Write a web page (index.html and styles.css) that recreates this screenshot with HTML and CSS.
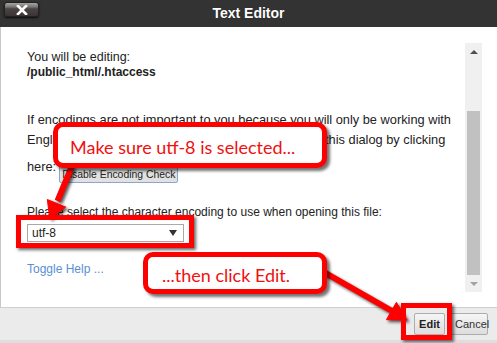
FILE: index.html
```html
<!DOCTYPE html>
<html>
<head>
<meta charset="utf-8">
<link rel="stylesheet" href="styles.css">
</head>
<body>
<div class="dialog">
  <div class="titlebar">
    <button class="close" aria-label="Close">
      <svg width="12" height="10" viewBox="0 0 12 10"><path d="M2 1 L10 9 M10 1 L2 9" stroke="#fff" stroke-width="2.6" stroke-linecap="square"/></svg>
    </button>
    <div class="title">Text Editor</div>
    <div></div>
  </div>
  <div class="main">
    <div class="content">
      <p class="editing">You will be editing:<br><strong>/public_html/.htaccess</strong></p>
      <p class="help">If encodings are not important to you because you will only be working with English language characters, you can safely disable this dialog by clicking</p>
      <div class="disable-row"><span>here:</span><button class="disable">Disable Encoding Check</button></div>
      <p class="select-label">Please select the character encoding to use when opening this file:</p>
      <div class="select"><span>utf-8</span><span class="caret"></span></div>
      <a class="toggle">Toggle Help ...</a>
    </div>
    <div class="scrollbar">
      <div class="sb-btn"><span class="tri-up"></span></div>
      <div class="sb-track"><div class="sb-thumb"></div></div>
      <div class="sb-btn"><span class="tri-down"></span></div>
    </div>
  </div>
  <div class="footer">
    <button class="btn edit">Edit</button>
    <button class="btn cancel">Cancel</button>
  </div>

  <svg class="arrows" width="497" height="343" viewBox="0 0 497 343">
    <g fill="#f00" stroke="#f00">
      <line x1="72" y1="166" x2="57.5" y2="201" stroke-width="6"/>
      <polygon points="50,219 65.7,207.1 47.3,199.5" stroke-width="1" stroke-linejoin="round"/>
      <line x1="322" y1="271" x2="392" y2="311" stroke-width="6"/>
      <polygon points="407,320 386.4,319.7 396.4,302.3" stroke-width="1" stroke-linejoin="round"/>
    </g>
  </svg>
  <div class="hl hl-select"></div>
  <div class="hl hl-edit"></div>
  <div class="callout callout-1">Make sure utf-8 is selected...</div>
  <div class="callout callout-2">...then click Edit.</div>
</div>
</body>
</html>
```
FILE: styles.css
```css
* { box-sizing: border-box; }
html, body { margin: 0; padding: 0; }
body {
  width: 497px;
  height: 343px;
  overflow: hidden;
  background: #fff;
  font-family: "Liberation Sans", Arial, sans-serif;
}
.dialog {
  position: relative;
  width: 497px;
  height: 343px;
  display: flex;
  flex-direction: column;
}
.titlebar {
  height: 27px;
  background: #333;
  display: grid;
  grid-template-columns: 1fr auto 1fr;
  align-items: center;
}
.close {
  justify-self: start;
  margin: 0 0 8px 4px;
  width: 35px;
  height: 15px;
  padding: 0;
  border: 1px solid #222;
  border-radius: 3px;
  background: linear-gradient(#a5a5a5 0%, #7a7575 30%, #4a4343 45%, #3c3535 100%);
  box-shadow: 0 1px 2px rgba(0,0,0,.8);
  display: flex;
  align-items: center;
  justify-content: center;
}
.close svg { display: block; }
.title {
  color: #fff;
  font-weight: bold;
  font-size: 14px;
  line-height: 16px;
  text-shadow: 0 0 1px rgba(0,0,0,.6);
  padding-bottom: 2px;
}
.main {
  height: 280px;
  display: flex;
  border-left: 1px solid #c9c9c9;
}
.content {
  flex: 1;
  padding: 23px 0 0 26px;
  font-size: 12px;
  color: #222;
}
.content p { margin: 0; }
.editing { line-height: 15px; font-size: 12.5px; }
.editing strong { font-size: 12px; }
.help { margin-top: 30px !important; line-height: 20px; font-size: 12.8px; }
.disable-row {
  margin-top: 7px;
  display: flex;
  align-items: flex-start;
  line-height: 20px;
  font-size: 12.8px;
}
.disable {
  margin: 8px 0 0 3px;
  height: 18px;
  padding: 0 2px;
  font: 10.4px "Liberation Sans", Arial, sans-serif;
  color: #222;
  background: #e1e1e1;
  border: 1px solid #8aa6cc;
  border-radius: 2px;
}
.select-label { margin-top: 22px !important; line-height: 15px; }
.select {
  margin-top: 4px;
  width: 157px;
  height: 18px;
  border: 1px solid #a9a9a9;
  display: flex;
  align-items: center;
  justify-content: space-between;
  padding: 0 6px 0 4px;
  font-size: 12px;
  color: #222;
}
.caret {
  width: 0; height: 0;
  border-left: 4px solid transparent;
  border-right: 4px solid transparent;
  border-top: 6px solid #333;
}
.toggle {
  display: block;
  margin-top: 20px;
  line-height: 15px;
  color: #5b8fd2;
  font-size: 12px;
}
.scrollbar {
  margin: 16px 15px 0 3px;
  width: 17px;
  height: 249px;
  background: #f0f0f0;
  display: flex;
  flex-direction: column;
}
.sb-btn {
  height: 17px;
  display: flex;
  align-items: center;
  justify-content: center;
}
.tri-up {
  width: 0; height: 0;
  border-left: 4px solid transparent;
  border-right: 4px solid transparent;
  border-bottom: 4px solid #505050;
}
.tri-down {
  width: 0; height: 0;
  border-left: 4px solid transparent;
  border-right: 4px solid transparent;
  border-top: 4px solid #a3a3a3;
}
.sb-track { flex: 1; padding: 51px 2px 0; }
.sb-thumb { height: 164px; background: #c1c1c1; }
.footer {
  flex: 1;
  background: #ebebeb;
  border-top: 1px solid #cfcfcf;
  border-bottom: 3px solid #dedede;
  display: flex;
  justify-content: flex-end;
  align-items: flex-start;
  padding: 5px 9px 0 0;
  gap: 6px;
}
.btn {
  height: 22px;
  font: 11px "Liberation Sans", Arial, sans-serif;
  color: #222;
  background: linear-gradient(#f6f6f6, #dddddd);
  border: 1px solid #adadad;
  border-radius: 2px;
  padding: 0 3px;
}
.edit { font-weight: bold; width: 31px; }
.cancel { width: 37px; color: #333; }

.arrows {
  position: absolute;
  left: 0; top: 0;
  filter: drop-shadow(2px 2px 1.5px rgba(0,0,0,.65));
}
.hl {
  position: absolute;
  border: 5px solid #f00;
  box-shadow: 2px 2px 3px rgba(0,0,0,.6);
}
.hl-select { left: 16px; top: 215px; width: 178px; height: 33px; }
.hl-edit { left: 401px; top: 303px; width: 51px; height: 37px; }
.callout {
  position: absolute;
  background: #fff;
  border: 5px solid #f00;
  border-radius: 10px;
  box-shadow: 3px 3px 3px rgba(0,0,0,.55);
  color: #ef1010;
  font-family: Lato, "Open Sans", sans-serif;
  font-size: 18px;
  display: flex;
  align-items: center;
  white-space: nowrap;
}
.callout-1 { left: 53px; top: 122px; width: 274px; height: 46px; padding: 3px 0 0 12px; }
.callout-2 { left: 143px; top: 252px; width: 184px; height: 42px; padding: 3px 0 0 14px; }
```
